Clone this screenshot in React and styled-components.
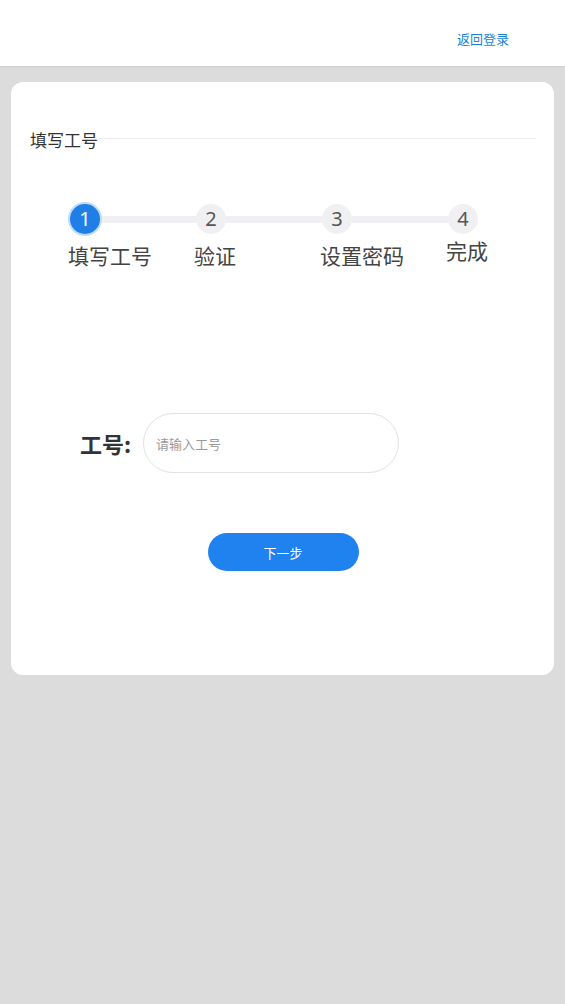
import styled, { createGlobalStyle } from 'styled-components';

const GlobalStyle = createGlobalStyle`
  html, body {
    margin: 0;
    padding: 0;
    background: #dcdcdc;
    font-family: "Noto Sans", "Noto Sans CJK SC", sans-serif;
  }
  * { box-sizing: border-box; }
`;

const steps = [
  { num: 1, label: '填写工号', active: true },
  { num: 2, label: '验证' },
  { num: 3, label: '设置密码' },
  { num: 4, label: '完成', last: true },
];

export default function App() {
  return (
    <Page>
      <GlobalStyle />
      <Header>
        <BackLink href="#">返回登录</BackLink>
      </Header>
      <Main>
        <Card>
          <TitleRow>
            <Title>填写工号</Title>
            <TitleLine />
          </TitleRow>

          <Steps>
            {steps.map((s) => (
              <Step key={s.num} $last={s.last}>
                <StepHead>
                  <Circle $active={s.active}>{s.num}</Circle>
                  {!s.last && <Connector />}
                </StepHead>
                <StepLabel $last={s.last}>{s.label}</StepLabel>
              </Step>
            ))}
          </Steps>

          <FormRow>
            <FieldLabel>工号:</FieldLabel>
            <Input placeholder="请输入工号" />
          </FormRow>

          <ButtonRow>
            <NextButton>下一步</NextButton>
          </ButtonRow>
        </Card>
      </Main>
    </Page>
  );
}

const Page = styled.div`
  min-height: 1004px;
  background: #dcdcdc;
`;

const Header = styled.header`
  height: 66px;
  background: #ffffff;
  display: flex;
  align-items: center;
  justify-content: flex-end;
  padding-right: 56px;
  padding-bottom: 1px;
  box-shadow: 0 1px 2px rgba(0, 0, 0, 0.06);
`;

const BackLink = styled.a`
  font-family: "Noto Sans CJK SC", sans-serif;
  font-size: 13px;
  color: #1a7fd8;
  text-decoration: none;
  margin-top: 12px;
`;

const Main = styled.main`
  padding: 16px 11px;
`;

const Card = styled.section`
  background: #ffffff;
  border-radius: 12px;
  padding: 47px 18px 104px 19px;
`;

const TitleRow = styled.div`
  display: flex;
  align-items: center;
  height: 20px;
`;

const Title = styled.h2`
  margin: 0;
  font-family: "Noto Sans CJK SC", sans-serif;
  font-size: 17px;
  font-weight: 400;
  color: #333333;
  line-height: 20px;
  margin-top: 2px;
`;

const TitleLine = styled.div`
  flex: 1;
  height: 1px;
  background: #ebebeb;
  margin-top: -2px;
  margin-left: 1px;
`;

const Steps = styled.div`
  display: flex;
  margin-top: 55px;
  padding-left: 40px;
`;

const Step = styled.div`
  display: flex;
  flex-direction: column;
  width: ${({ $last }) => ($last ? 'auto' : '126px')};
`;

const StepHead = styled.div`
  display: flex;
  align-items: center;
  height: 30px;
`;

const Circle = styled.div`
  width: 30px;
  height: 30px;
  flex: none;
  border-radius: 50%;
  display: flex;
  align-items: center;
  justify-content: center;
  font-size: 20px;
  line-height: 1;
  background: ${({ $active }) => ($active ? '#1f7fe6' : '#f0f0f3')};
  color: ${({ $active }) => ($active ? '#ffffff' : '#555555')};
  box-shadow: ${({ $active }) => ($active ? '0 0 0 2px #bcdcfb' : 'none')};
  position: relative;
  z-index: 1;
`;

const Connector = styled.div`
  flex: 1;
  height: 7px;
  background: #f0f0f3;
`;

const StepLabel = styled.div`
  font-family: "Noto Sans CJK SC", sans-serif;
  font-size: 21px;
  line-height: 26px;
  color: #444444;
  margin-top: ${({ $last }) => ($last ? '3px' : '8px')};
  margin-left: -2px;
  white-space: nowrap;
`;

const FormRow = styled.div`
  display: flex;
  align-items: center;
  margin-top: 145px;
  padding-left: 50px;
`;

const FieldLabel = styled.label`
  font-family: "Noto Sans CJK SC", sans-serif;
  font-size: 22px;
  font-weight: 700;
  color: #333333;
  width: 63px;
`;

const Input = styled.input`
  width: 256px;
  height: 60px;
  border: 1px solid #e2e2e2;
  border-radius: 30px;
  padding: 0 12px;
  font-family: "Noto Sans CJK SC", sans-serif;
  font-size: 13px;
  color: #333333;
  outline: none;
  background: #ffffff;

  &::placeholder {
    color: #9a9a9a;
  }
`;

const ButtonRow = styled.div`
  display: flex;
  justify-content: center;
  margin-top: 60px;
`;

const NextButton = styled.button`
  width: 151px;
  height: 38px;
  border: none;
  border-radius: 19px;
  background: #2082ef;
  color: #ffffff;
  font-family: "Noto Sans CJK SC", sans-serif;
  font-size: 13px;
  cursor: pointer;
`;
